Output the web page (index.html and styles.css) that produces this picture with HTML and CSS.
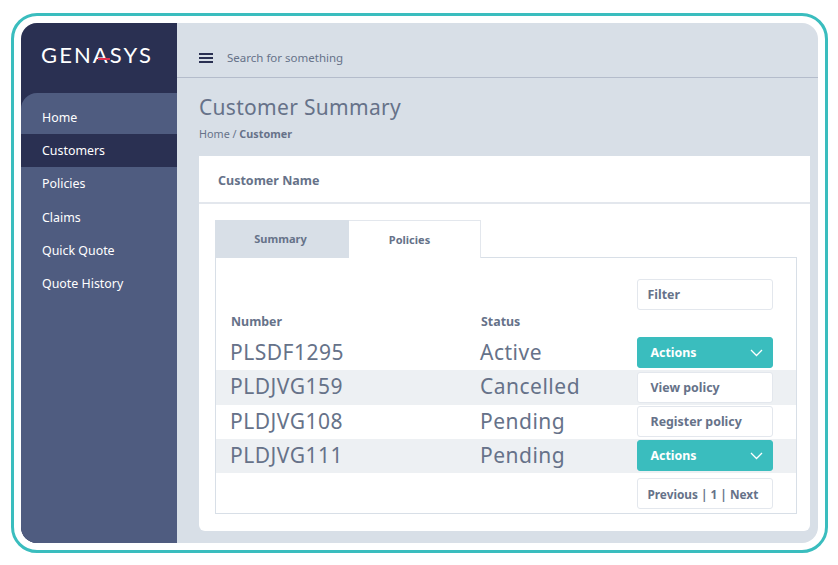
FILE: index.html

```html
<!DOCTYPE html>
<html lang="en">
<head>
  <meta charset="UTF-8" />
  <title>Customer Summary</title>
  <meta name="viewport" content="width=device-width, initial-scale=1.0" />
  <link rel="stylesheet" href="styles.css">
</head>
<body>

<div class="frame">
  <div class="screen">

    <aside class="sidebar">
      <div class="logo"><span class="logo-text">GENASYS</span><span class="logo-slash"></span></div>
      <nav class="nav">
        <a class="nav-item">Home</a>
        <a class="nav-item active">Customers</a>
        <a class="nav-item">Policies</a>
        <a class="nav-item">Claims</a>
        <a class="nav-item">Quick Quote</a>
        <a class="nav-item">Quote History</a>
      </nav>
    </aside>

    <main class="main">
      <header class="topbar">
        <svg class="burger" width="14" height="10" viewBox="0 0 14 10">
          <path d="M0 1h14M0 5h14M0 9h14" stroke="#2a3052" stroke-width="2" fill="none" />
        </svg>
        <span class="search">Search for something</span>
      </header>

      <div class="content">
        <h1 class="title">Customer Summary</h1>
        <div class="crumbs">Home / <strong>Customer</strong></div>

        <section class="card">
          <div class="card-head">Customer Name</div>
          <div class="card-body">
            <div class="tabs">
              <div class="tab">Summary</div>
              <div class="tab current">Policies</div>
            </div>
            <div class="panel">
              <div class="filter-row">
                <div class="btn filter">Filter</div>
              </div>
              <div class="row heading">
                <span>Number</span>
                <span>Status</span>
              </div>
              <div class="row">
                <span>PLSDF1295</span>
                <span>Active</span>
                <div class="btn teal">Actions
                  <svg width="13" height="8" viewBox="0 0 13 8"><path d="M1 1l5.500 5.500 5.500-5.500" stroke="#fff" stroke-width="1.3" fill="none" /></svg>
                </div>
              </div>
              <div class="row stripe">
                <span>PLDJVG159</span>
                <span>Cancelled</span>
                <div class="btn">View policy</div>
              </div>
              <div class="row">
                <span>PLDJVG108</span>
                <span>Pending</span>
                <div class="btn">Register policy</div>
              </div>
              <div class="row stripe">
                <span>PLDJVG111</span>
                <span>Pending</span>
                <div class="btn teal">Actions
                  <svg width="13" height="8" viewBox="0 0 13 8"><path d="M1 1l5.500 5.500 5.500-5.500" stroke="#fff" stroke-width="1.3" fill="none" /></svg>
                </div>
              </div>
              <div class="pager-row">
                <div class="btn pager">Previous | 1 | Next</div>
              </div>
            </div>
          </div>
        </section>
      </div>
    </main>

  </div>
</div>

</body>
</html>
```

FILE: styles.css

```css
* {
  box-sizing: border-box;
}

body {
  margin: 0;
  background-color: #fff;
  font-family: "Noto Sans", sans-serif;
  color: #667289;
}

.frame {
  width: 817px;
  height: 540px;
  margin: 13px 0 0 11px;
  padding: 7px;
  border: 3px solid #3abdbe;
  border-radius: 26px;
}

.screen {
  display: flex;
  height: 520px;
  background-color: #d8dfe7;
  border-radius: 16px;
  overflow: hidden;
}

/* sidebar */
.sidebar {
  width: 156px;
  flex-shrink: 0;
  display: flex;
  flex-direction: column;
  background-color: #2a3052;
}

.logo {
  position: relative;
  height: 70px;
  padding: 19px 0 0 20px;
}

.logo-text {
  font-family: "Lato", sans-serif;
  font-size: 22px;
  line-height: 26px;
  letter-spacing: 2.1px;
  color: #fff;
}

.logo-slash {
  position: absolute;
  left: 77px;
  top: 35px;
  width: 12px;
  height: 1.5px;
  background-color: #e0304f;
}

.nav {
  flex: 1;
  padding-top: 8px;
  background-color: #4f5c80;
  border-top-left-radius: 16px;
}

.nav-item {
  display: block;
  height: 33.2px;
  padding-left: 21px;
  font-size: 12.4px;
  line-height: 33px;
  color: #fff;
}

.nav-item.active {
  background-color: #2a3052;
}

/* top bar */
.main {
  flex: 1;
  min-width: 0;
}

.topbar {
  display: flex;
  align-items: center;
  gap: 14px;
  height: 55px;
  padding: 15px 0 0 22px;
  border-bottom: 1px solid #b4bccb;
}

.search {
  font-size: 11.5px;
}

/* content */
.content {
  padding: 0 8px 0 22px;
}

.title {
  margin: 14px 0 0;
  font-size: 21px;
  line-height: 30px;
  font-weight: 400;
  letter-spacing: 0.3px;
}

.crumbs {
  margin-top: 4px;
  font-size: 10.8px;
  line-height: 15px;
}

.card {
  height: 375px;
  margin-top: 15px;
  background-color: #fff;
  border-radius: 0 0 6px 6px;
}

.card-head {
  height: 48px;
  padding-left: 19px;
  border-bottom: 2px solid #e3e7ed;
  font-size: 12.5px;
  font-weight: 700;
  line-height: 49px;
}

.card-body {
  padding: 16px 13px 0 16px;
}

.tabs {
  display: flex;
  height: 37px;
  font-size: 11px;
  font-weight: 700;
  line-height: 38px;
  text-align: center;
}

.tab {
  width: 134px;
  background-color: #d8dfe7;
  padding-right: 3px;
}

.tab.current {
  width: 132px;
  position: relative;
  z-index: 1;
  height: 38px;
  padding-right: 10px;
  background-color: #fff;
  border-top: 1px solid #e3e7ed;
  border-right: 1px solid #e3e7ed;
}

.panel {
  height: 257px;
  border: 1px solid #d8dfe7;
}

.filter-row {
  display: flex;
  padding: 21px 0 0 421px;
}

.row {
  display: grid;
  grid-template-columns: 250px 157px 136px;
  align-items: center;
  height: 34.25px;
  padding-left: 14px;
  font-size: 21px;
  letter-spacing: 0.5px;
}

.row span {
  padding-bottom: 2px;
}

.row .btn {
  margin-top: -0.5px;
}

.row.stripe {
  background-color: #edf0f3;
}

.row.heading {
  height: 26px;
  padding: 0 0 2px 15px;
  font-size: 12.4px;
  font-weight: 700;
  letter-spacing: 0;
}

.btn {
  display: flex;
  align-items: center;
  justify-content: space-between;
  width: 136px;
  height: 31px;
  padding: 0 9px 0 12.500px;
  background-color: #fff;
  border: 1px solid #e3e7ed;
  border-radius: 3px;
  font-size: 12.4px;
  font-weight: 700;
  letter-spacing: 0;
}

.btn.filter,
.btn.pager {
  padding-left: 9.500px;
}

.btn.pager {
  font-size: 11.8px;
}

.btn.teal {
  background-color: #3abdbe;
  border-color: #3abdbe;
  color: #fff;
}

.pager-row {
  padding: 5px 0 0 421px;
}
```
